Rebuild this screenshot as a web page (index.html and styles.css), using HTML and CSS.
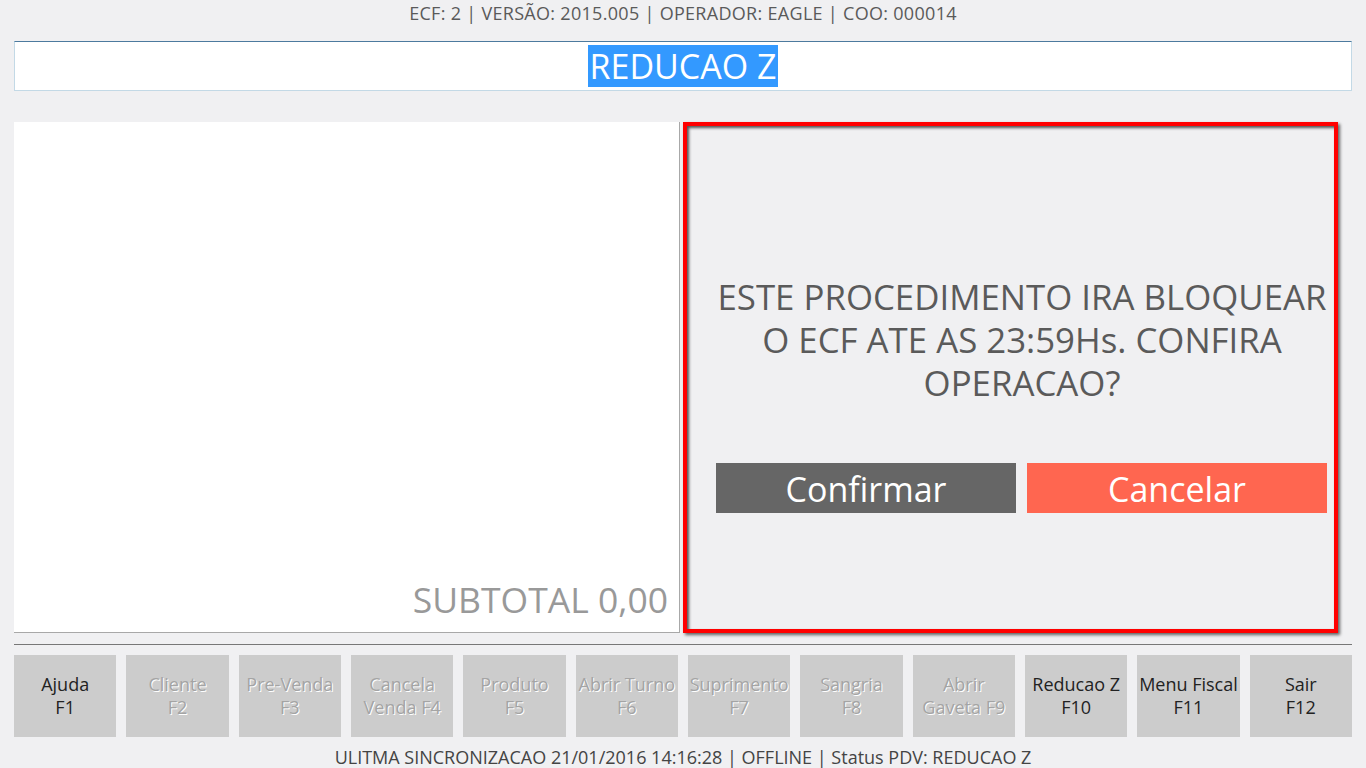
FILE: index.html
```html
<!DOCTYPE html>
<html lang="pt">
<head>
<meta charset="utf-8">
<title>PDV - Reducao Z</title>
<link rel="stylesheet" href="styles.css">
</head>
<body>
<div class="page">
  <div class="info">ECF: 2 | VERSÃO: 2015.005 | OPERADOR: EAGLE | COO: 000014</div>
  <div class="search"><span class="sel">REDUCAO Z</span></div>
  <div class="main">
    <div class="items">
      <div class="subtotal">SUBTOTAL 0,00</div>
    </div>
    <div class="dialog">
      <div class="dialog-body">
        <div class="message">ESTE PROCEDIMENTO IRA BLOQUEAR<br>O ECF ATE AS 23:59Hs. CONFIRA<br>OPERACAO?</div>
        <div class="actions">
          <button class="btn btn-confirm">Confirmar</button>
          <button class="btn btn-cancel">Cancelar</button>
        </div>
      </div>
    </div>
  </div>
  <div class="divider"></div>
  <div class="keys">
    <div class="key">Ajuda<br>F1</div>
    <div class="key off">Cliente<br>F2</div>
    <div class="key off">Pre-Venda<br>F3</div>
    <div class="key off">Cancela<br>Venda F4</div>
    <div class="key off">Produto<br>F5</div>
    <div class="key off">Abrir Turno<br>F6</div>
    <div class="key off">Suprimento<br>F7</div>
    <div class="key off">Sangria<br>F8</div>
    <div class="key off">Abrir<br>Gaveta F9</div>
    <div class="key">Reducao Z<br>F10</div>
    <div class="key">Menu Fiscal<br>F11</div>
    <div class="key">Sair<br>F12</div>
  </div>
  <div class="status">ULITMA SINCRONIZACAO 21/01/2016 14:16:28 | OFFLINE | Status PDV: REDUCAO Z</div>
</div>
</body>
</html>
```

FILE: styles.css
```css
html, body {
  margin: 0;
  padding: 0;
  background: #f0f0f2;
}
body {
  font-family: "Open Sans", "DejaVu Sans", sans-serif;
  color: #444;
  width: 1366px;
  height: 768px;
  overflow: hidden;
}
.page {
  padding: 0 14px;
}
.info {
  height: 26px;
  line-height: 26px;
  text-align: center;
  font-size: 18px;
  letter-spacing: 0.3px;
  color: #5a5a5a;
}
.search {
  margin-top: 15px;
  height: 48px;
  background: #fff;
  border: 1px solid #c3d9e6;
  border-top-color: #4c7a9e;
  display: flex;
  justify-content: center;
  align-items: center;
}
.sel {
  background: #3399ff;
  color: #fff;
  font-size: 34px;
  line-height: 42px;
  padding: 0 2px;
}
.main {
  margin-top: 31px;
  height: 511px;
  display: flex;
  gap: 3px;
}
.items {
  width: 665px;
  background: #fff;
  border-right: 1px solid #a8a8a8;
  border-bottom: 1px solid #a8a8a8;
  display: flex;
  align-items: flex-end;
  justify-content: flex-end;
}
.subtotal {
  font-size: 35.5px;
  color: #999;
  padding: 0 11px 9px 0;
}
.dialog {
  width: 647px;
  border: 4px solid #ff0000;
  box-shadow: inset 2px 2px 3px rgba(0,0,0,0.65), 2px 2px 3px rgba(0,0,0,0.6);
  display: flex;
}
.dialog-body {
  padding: 149px 0 0 29px;
  width: 612px;
}
.message {
  font-size: 34.8px;
  line-height: 43px;
  color: #5a5a5a;
  text-align: center;
  white-space: nowrap;
}
.actions {
  margin-top: 59px;
  display: flex;
  gap: 11px;
}
.btn {
  width: 300px;
  height: 50px;
  border: 0;
  margin: 0;
  padding: 0;
  font-family: inherit;
  font-size: 34px;
  color: #fff;
  line-height: 52px;
}
.btn-confirm { background: #666666; }
.btn-cancel { background: #ff6650; }
.divider {
  margin-top: 11px;
  border-top: 1px solid #777;
}
.keys {
  margin-top: 10px;
  display: flex;
  gap: 10px;
}
.key {
  flex: 1;
  height: 82px;
  background: #cccccc;
  display: flex;
  align-items: center;
  justify-content: center;
  text-align: center;
  font-size: 18px;
  line-height: 23px;
  color: #222;
}
.key.off {
  color: #a4a4a4;
  text-shadow: 1px 1px 0 #fff;
}
.status {
  margin-top: 8px;
  text-align: center;
  font-size: 18px;
  line-height: 24px;
  color: #444;
}
```
